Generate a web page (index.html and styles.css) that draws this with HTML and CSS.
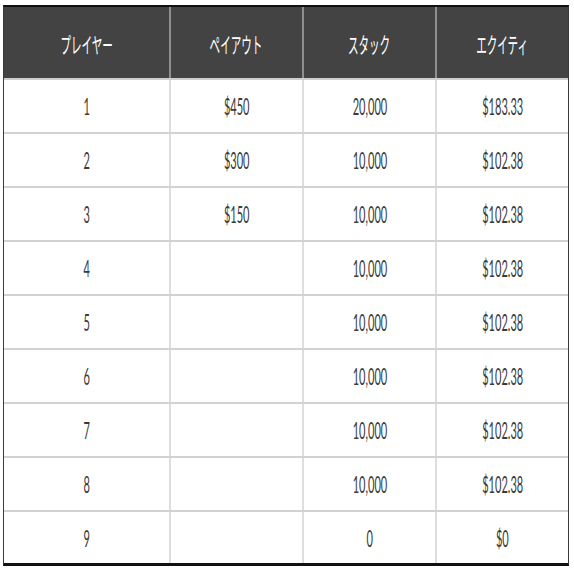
FILE: index.html
```html
<!DOCTYPE html>
<html lang="ja">
<head>
<meta charset="utf-8">
<link rel="stylesheet" href="styles.css">
</head>
<body>
<div class="table">
  <div class="row head">
    <div class="cell"><span>プレイヤー</span></div>
    <div class="cell"><span>ペイアウト</span></div>
    <div class="cell"><span>スタック</span></div>
    <div class="cell"><span>エクイティ</span></div>
  </div>
  <div class="row"><div class="cell"><span>1</span></div><div class="cell"><span>$450</span></div><div class="cell"><span>20,000</span></div><div class="cell"><span>$183.33</span></div></div>
  <div class="row"><div class="cell"><span>2</span></div><div class="cell"><span>$300</span></div><div class="cell"><span>10,000</span></div><div class="cell"><span>$102.38</span></div></div>
  <div class="row"><div class="cell"><span>3</span></div><div class="cell"><span>$150</span></div><div class="cell"><span>10,000</span></div><div class="cell"><span>$102.38</span></div></div>
  <div class="row"><div class="cell"><span>4</span></div><div class="cell"></div><div class="cell"><span>10,000</span></div><div class="cell"><span>$102.38</span></div></div>
  <div class="row"><div class="cell"><span>5</span></div><div class="cell"></div><div class="cell"><span>10,000</span></div><div class="cell"><span>$102.38</span></div></div>
  <div class="row"><div class="cell"><span>6</span></div><div class="cell"></div><div class="cell"><span>10,000</span></div><div class="cell"><span>$102.38</span></div></div>
  <div class="row"><div class="cell"><span>7</span></div><div class="cell"></div><div class="cell"><span>10,000</span></div><div class="cell"><span>$102.38</span></div></div>
  <div class="row"><div class="cell"><span>8</span></div><div class="cell"></div><div class="cell"><span>10,000</span></div><div class="cell"><span>$102.38</span></div></div>
  <div class="row last"><div class="cell"><span>9</span></div><div class="cell"></div><div class="cell"><span>0</span></div><div class="cell"><span>$0</span></div></div>
</div>
</body>
</html>
```
FILE: styles.css
```css
html, body {
  margin: 0;
  padding: 0;
  background: #ffffff;
}
body {
  font-family: "Lato", "Noto Sans CJK JP", sans-serif;
}
.table {
  margin: 5px 0 0 3px;
  width: 566px;
  box-sizing: border-box;
  border-top: 2px solid #111111;
  border-bottom: 3px solid #111111;
  border-left: 1px solid #3a3a3a;
  border-right: 1px solid #3a3a3a;
}
.row {
  display: grid;
  grid-template-columns: 167px 133px 133px 131px;
  height: 54px;
  box-sizing: border-box;
  border-bottom: 2px solid #d2d2d2;
}
.row.last {
  height: 51px;
  border-bottom: none;
}
.row.head {
  height: 73px;
  background: #434343;
  border-bottom: 2px solid #cfcfcf;
}
.cell {
  display: flex;
  align-items: center;
  justify-content: center;
  border-right: 2px solid #dedede;
  font-size: 23px;
  color: #3a3a3a;
  overflow: hidden;
}
.cell:last-child {
  border-right: none;
}
.head .cell {
  color: #ffffff;
  border-right-color: #8f8f8f;
  font-size: 22px;
}
.cell span {
  display: inline-block;
  white-space: nowrap;
  transform: scaleX(0.48);
}
```
